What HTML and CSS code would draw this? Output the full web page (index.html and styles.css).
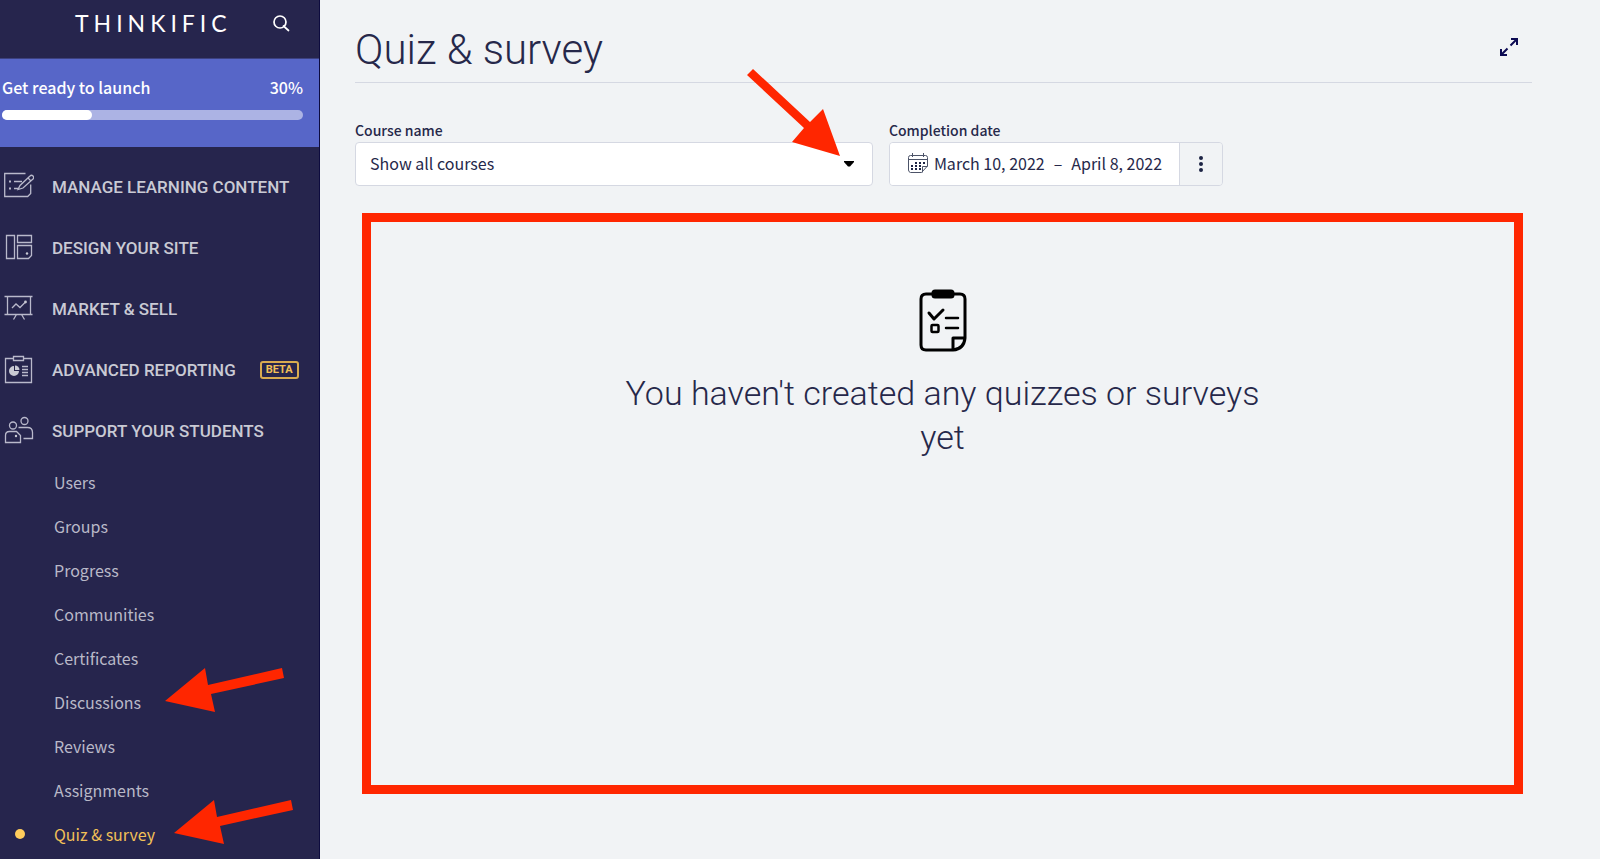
FILE: index.html
```
<!DOCTYPE html>
<html lang="en">
<head>
<meta charset="utf-8">
<meta name="viewport" content="width=device-width, initial-scale=1">
<title>Quiz &amp; survey</title>
<link rel="stylesheet" href="styles.css">
</head>
<body>
<div class="app">
  <aside class="sidebar">
    <header class="brand">
      <a class="logo" href="#">THINKIFIC</a>
      <button class="icon-button" type="button" aria-label="Search">
        <svg width="18" height="18" viewBox="0 0 18 18" fill="none" stroke="#fff" stroke-width="1.7" stroke-linecap="round"><circle cx="8" cy="8" r="6"/><path d="M11.5 12l5 4.500"/></svg>
      </button>
    </header>
    <section class="launch">
      <div class="launch-row"><label for="launch-progress">Get ready to launch</label><span>30%</span></div>
      <progress id="launch-progress" class="launch-bar" value="30" max="100"></progress>
    </section>
    <nav class="nav">
      <a class="nav-item" href="#">
        <svg class="nav-icon" viewBox="0 2 30 30"><path d="M21.500 3.500H.7v23h23l3-3v-9"/><path d="M14 19.500l2-4L26 6a2 2 0 0 1 3 3l-10 9z"/><path d="M24 8l3 3M10 11.500h8M10 18.500h5"/><path d="M5 11.500h2M5 18.500h2" stroke-width="2"/></svg>
        <span>MANAGE LEARNING CONTENT</span></a>
      <a class="nav-item" href="#">
        <svg class="nav-icon" viewBox="0 1 30 30"><path d="M2.500 3.500h8v23h-8zM13.500 3.500h14v7h-14zM13.500 13.500h14v10l-3 3h-11z"/><circle class="solid" cx="23" cy="21.500" r="1.200"/></svg>
        <span>DESIGN YOUR SITE</span></a>
      <a class="nav-item" href="#">
        <svg class="nav-icon" viewBox="0 1 30 30"><path d="M.5 3.500h28M.5 21.500h28M3.500 3.500v18M26.500 3.500v18M12.500 21.500l-3 5M17.500 21.500l3 5M8 15l4-4 4 3.500 5-5"/><circle class="solid" cx="21.500" cy="9" r="1.400"/></svg>
        <span>MARKET &amp; SELL</span></a>
      <a class="nav-item" href="#">
        <svg class="nav-icon" viewBox="0 1 30 30"><path d="M9.500 4.500h-8v24h26v-24h-8M9.500 2.500h10v4h-10z"/><path class="solid" d="M10 12v5h5a5 5 0 1 1-5-5z"/><path class="solid" d="M11 11.500a4.500 4.500 0 0 1 4.500 4.500H11z"/><path d="M18 12.500h6M18 15.500h6M18 18.500h6M18 21.500h6"/></svg>
        <span>ADVANCED REPORTING</span><span class="beta">BETA</span></a>
      <a class="nav-item" href="#">
        <svg class="nav-icon" viewBox="0 0 30 30"><circle cx="9" cy="9.500" r="3.500"/><circle cx="20.500" cy="5" r="3.500"/><path d="M1.500 26.500v-7q0-4 4-4h7l4 4v7zM14.500 11.500h9q5 0 5 5v6h-9"/><circle class="solid" cx="12" cy="20" r="1.200"/></svg>
        <span>SUPPORT YOUR STUDENTS</span></a>
      <ul class="subnav">
        <li><a href="#">Users</a></li>
        <li><a href="#">Groups</a></li>
        <li><a href="#">Progress</a></li>
        <li><a href="#">Communities</a></li>
        <li><a href="#">Certificates</a></li>
        <li class="pointed"><a href="#">Discussions</a>
          <svg class="arrow arrow-discussions" width="120" height="46" viewBox="0 0 120 46"><path d="M0 34L40 1l3 17 74-17 2 10-73 16 4 18z"/></svg></li>
        <li><a href="#">Reviews</a></li>
        <li><a href="#">Assignments</a></li>
        <li class="pointed"><a class="current" href="#" aria-current="page">Quiz &amp; survey</a>
          <svg class="arrow arrow-quiz" width="120" height="46" viewBox="0 0 120 46"><path d="M0 34L40 1l3 17 74-17 2 10-73 16 4 18z"/></svg></li>
      </ul>
    </nav>
  </aside>
  <main class="content">
    <header class="page-head">
      <h1>Quiz &amp; survey</h1>
      <button class="icon-button expand" type="button" aria-label="Expand">
        <svg width="18" height="18" viewBox="0 0 18 18" fill="none" stroke="#0c0a52" stroke-width="2"><path d="M10.500 7.500L16.500 1.500M11 1h6v6M7.500 10.500L1.500 16.500M1 11v6h6"/></svg>
      </button>
    </header>
    <form class="filters">
      <div class="field course">
        <label for="course">Course name</label>
        <div class="select-wrap">
          <select id="course"><option>Show all courses</option></select>
          <svg class="caret" width="10" height="6" viewBox="0 0 10 6"><path d="M0 0h10v1L6 5.500H4L0 1z"/></svg>
          <svg class="arrow arrow-course" width="94" height="89" viewBox="0 0 94 89"><path d="M6 1l57 53 13-13 17 47-48-14 12-14L0 7z"/></svg>
        </div>
      </div>
      <div class="field">
        <label for="dates">Completion date</label>
        <div class="date-group">
          <button id="dates" class="date-range" type="button">
            <svg width="22" height="22" viewBox="0 0 22 22" fill="none" stroke="#4c5368"><path d="M3.500 3.500h15q2 0 2 2v8.500l-6 6.500h-11q-2-.5-2-2.500V5.500q0-2 2-2zM1.500 7.500h19M20.500 14.500h-5v6M5.500 1v4M16.500 1v4"/><path stroke="#1d2444" stroke-width="2" stroke-dasharray="2 2" d="M8 11h10M4 14h10M4 17h10"/></svg>
            <span>March 10, 2022</span><span class="dash">–</span><span>April 8, 2022</span>
          </button>
          <button class="more" type="button" aria-label="More options">
            <svg width="4" height="16" viewBox="0 0 4 16" fill="#1d2444"><circle cx="2" cy="2" r="2"/><circle cx="2" cy="8" r="2"/><circle cx="2" cy="14" r="2"/></svg>
          </button>
        </div>
      </div>
    </form>
    <section class="empty">
      <svg width="48" height="64" viewBox="0 0 48 64" fill="none" stroke="#000" stroke-width="3" stroke-linecap="round" stroke-linejoin="round"><path d="M7 5h34q5 0 5 5v39q-1 11-12 12H7q-5 0-5-5V10q0-5 5-5z"/><path d="M34 60V49h11"/><rect x="14" y="2" width="20" height="6" rx="2" fill="#000"/><path d="M10 24l5 6 9-9"/><path stroke-width="2.500" d="M27 29h12M27 39h12"/><rect stroke-width="2.500" x="12.500" y="36" width="7" height="7" rx="1"/></svg>
      <p>You haven't created any quizzes or surveys yet</p>
    </section>
  </main>
</div>
</body>
</html>
```
FILE: styles.css
```
* { box-sizing: border-box; }
body {
  margin: 0;
  font-family: "Noto Sans CJK SC", "Noto Sans", sans-serif;
  font-size: 16px;
  line-height: 24px;
  color: #26284a;
  background: #f1f3f5;
}
a { color: inherit; text-decoration: none; }
button { font: inherit; color: inherit; cursor: pointer; }
.app { display: flex; min-height: 100vh; }

.sidebar {
  flex: 0 0 320px;
  background: #26254d;
  border-right: 1px solid #0d0b3e;
}
.brand {
  display: flex;
  align-items: center;
  justify-content: space-between;
  height: 59px;
  padding: 0 29px 12px 75px;
  border-bottom: 1px solid #3c4180;
}
.logo {
  font-family: Lato, sans-serif;
  font-size: 23px;
  letter-spacing: 5px;
  color: #fff;
}
.icon-button {
  display: flex;
  padding: 0;
  border: 0;
  background: none;
}
.launch {
  height: 88px;
  padding: 16px 16px 0 2px;
  background: #5766c8;
  color: #fff;
}
.launch-row {
  display: flex;
  justify-content: space-between;
  font-weight: 500;
}
.launch-bar {
  display: block;
  width: 100%;
  height: 10px;
  margin-top: 11px;
  border: 0;
  border-radius: 5px;
  overflow: hidden;
  appearance: none;
  background: #acb3e4;
}
.launch-bar::-webkit-progress-bar { background: #acb3e4; }
.launch-bar::-webkit-progress-value { background: #fff; border-radius: 0 5px 5px 0; }

.nav { padding-top: 9px; color: #c9cad4; }
.nav-item {
  display: flex;
  align-items: center;
  height: 61px;
  padding-left: 4px;
  font-family: Roboto, sans-serif;
  font-size: 17px;
  font-weight: 500;
}
.nav-icon {
  width: 30px;
  height: 30px;
  margin-right: 18px;
  fill: none;
  stroke: #b9b9cb;
  stroke-width: 1.3;
}
.nav-icon .solid { fill: #c9cad4; stroke: none; }
.beta {
  margin-left: 24px;
  padding: 0 4px;
  border: 2px solid #d9ab50;
  border-radius: 3px;
  font-size: 11px;
  font-weight: 700;
  line-height: 14px;
  color: #f2c057;
}
.subnav { margin: 0; padding: 0; list-style: none; color: #b9b9c8; }
.subnav a {
  display: flex;
  align-items: center;
  height: 44px;
  padding: 0 0 2px 54px;
}
.subnav .current { color: #f2c057; padding-left: 15px; }
.current::before {
  content: "";
  width: 10px;
  height: 10px;
  margin-right: 29px;
  border-radius: 50%;
  background: #ffcd5c;
}
.pointed, .select-wrap { position: relative; }
.arrow { position: absolute; fill: #ff2600; pointer-events: none; }
.arrow-discussions { left: 165px; top: -14px; }
.arrow-quiz { left: 174px; top: -14px; }
.arrow-course { right: 32px; top: -74px; }

.content { flex: 1; min-width: 0; padding: 0 68px 64px 35px; }
.page-head {
  display: flex;
  align-items: center;
  justify-content: space-between;
  height: 83px;
  padding-top: 18px;
  border-bottom: 1px solid #d5d8e2;
}
h1 {
  margin: 0;
  font-family: Roboto, sans-serif;
  font-size: 42px;
  font-weight: 300;
  line-height: 52px;
}
.expand { margin: 0 14px 6px 0; }
.filters { display: flex; gap: 16px; padding-top: 36px; }
.course { flex: 0 0 44%; }
.field label {
  display: block;
  font-size: 14px;
  font-weight: 500;
  line-height: 23px;
}
select {
  display: block;
  width: 100%;
  height: 44px;
  padding: 0 40px 2px 14px;
  border: 1px solid #d5d8e2;
  border-radius: 4px;
  appearance: none;
  font: inherit;
  color: inherit;
  background: #fff;
}
.caret { position: absolute; right: 19px; top: 19px; }
.date-group {
  display: flex;
  height: 44px;
  border: 1px solid #d5d8e2;
  border-radius: 4px;
  overflow: hidden;
}
.date-range {
  display: flex;
  align-items: center;
  padding: 0 17px 2px 17px;
  border: 0;
  background: #fff;
}
.date-range svg { margin-right: 5px; }
.dash { margin: 0 9px; }
.more {
  display: flex;
  align-items: center;
  justify-content: center;
  width: 43px;
  padding: 0;
  border: 0;
  border-left: 1px solid #d5d8e2;
  background: #f1f3f5;
}
.empty {
  display: flex;
  flex-direction: column;
  align-items: center;
  min-height: 581px;
  margin: 27px 9px 0 7px;
  padding-top: 67px;
  border: 9px solid #ff2600;
}
.empty p {
  max-width: 660px;
  margin: 18px 0 0;
  font-family: Roboto, sans-serif;
  font-size: 34px;
  font-weight: 300;
  line-height: 44px;
  text-align: center;
}
```
